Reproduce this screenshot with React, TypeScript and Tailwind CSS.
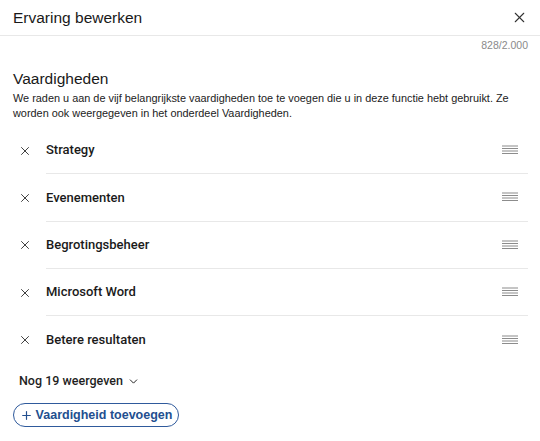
import { X, Plus, ChevronDown } from 'lucide-react';

const skills = ['Strategy', 'Evenementen', 'Begrotingsbeheer', 'Microsoft Word', 'Betere resultaten'];

function DragHandle() {
  return (
    <svg width="16" height="10" viewBox="0 0 16 10" className="text-[#8c8c8c]">
      <rect x="0" y="0.5" width="16" height="1" fill="currentColor" />
      <rect x="0" y="3" width="16" height="1" fill="currentColor" />
      <rect x="0" y="5.5" width="16" height="1" fill="currentColor" />
      <rect x="0" y="8" width="16" height="1" fill="currentColor" />
    </svg>
  );
}

export default function App() {
  return (
    <div className="w-[540px] h-[441px] bg-white text-[#191919] overflow-hidden font-['Liberation_Sans',Arial,sans-serif]">
      <div className="h-[36px] flex items-center justify-between pl-[13px] pr-[12px] border-b border-[#e8e8e8]">
        <h1 className="text-[15.5px] leading-none">Ervaring bewerken</h1>
        <X size={17} strokeWidth={1.5} className="text-[#333]" />
      </div>
      <div className="flex justify-end pr-[12px] pt-[2px] text-[10.5px] text-[#8a8a8a] leading-[14px]">828/2.000</div>

      <div className="px-[13px] pt-[17px]">
        <h2 className="text-[15.5px] leading-[20px]">Vaardigheden</h2>
        <p className="text-[10.9px] leading-[15px] mt-[2px] text-[#222]">
          We raden u aan de vijf belangrijkste vaardigheden toe te voegen die u in deze functie hebt gebruikt. Ze
          worden ook weergegeven in het onderdeel Vaardigheden.
        </p>
      </div>

      <ul className="mt-[6px] pl-[17px] pr-[12px]">
        {skills.map((s, i) => (
          <li key={s} className="flex items-stretch">
            <div className="w-[16px] h-[47.3px] flex items-center justify-center">
              <X size={14} strokeWidth={1.6} className="text-[#333]" />
            </div>
            <div
              className={`flex-1 ml-[13px] h-[47.3px] flex items-center justify-between ${
                i < skills.length - 1 ? 'border-b border-[#e8e8e8]' : ''
              }`}
            >
              <span className="text-[13px] font-medium font-['Roboto',sans-serif] text-[#1a1a1a]">{s}</span>
              <div className="pr-[10px]">
                <DragHandle />
              </div>
            </div>
          </li>
        ))}
      </ul>

      <button className="mt-[9px] ml-[19px] flex items-center gap-[4px] text-[12.5px] font-medium font-['Roboto',sans-serif] text-[#1f1f1f]">
        Nog 19 weergeven
        <ChevronDown size={13} strokeWidth={1.8} />
      </button>

      <button className="mt-[12px] ml-[13px] h-[24px] w-[166px] rounded-full border border-[#2f5a9c] flex items-center justify-center gap-[3px] text-[12.5px] font-bold text-[#234f8f]">
        <Plus size={13} strokeWidth={2.2} />
        Vaardigheid toevoegen
      </button>
    </div>
  );
}
